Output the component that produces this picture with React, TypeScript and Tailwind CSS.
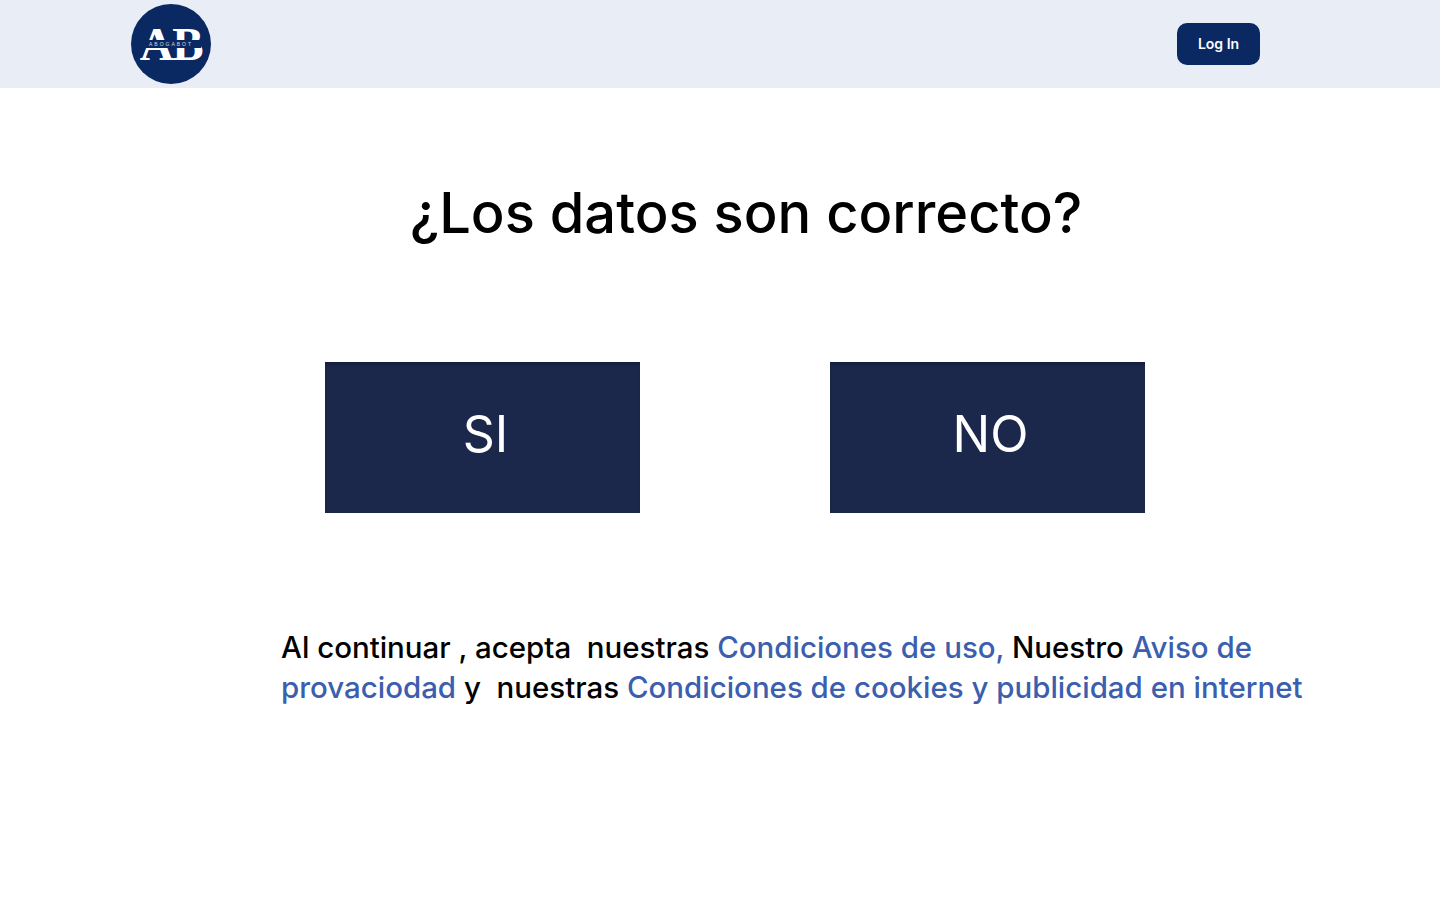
const FONT = "font-['Inter','Noto_Sans',sans-serif]";

function Logo() {
  return (
    <div className="relative flex h-20 w-20 items-center justify-center rounded-full bg-[#0a2861]">
      <span className="font-['Liberation_Serif',serif] text-[47px] font-bold leading-none tracking-[-1.5px] text-white">
        AB
      </span>
      <span className="absolute left-[10px] right-[10px] top-[36px] bg-[#0a2861] text-center font-['Liberation_Sans',sans-serif] text-[5px] leading-[8px] tracking-[2px] text-white/80">
        ABOGABOT
      </span>
    </div>
  );
}

function ChoiceButton({ label }: { label: string }) {
  return (
    <button
      type="button"
      className="h-[151px] w-[315px] bg-[#1b284b] pb-[8px] pl-[6px] text-[50px] font-normal leading-none text-white shadow-[inset_0_4px_3px_-1px_#151f42]"
    >
      {label}
    </button>
  );
}

export default function App() {
  return (
    <div className={`min-h-[902px] bg-white text-black ${FONT}`}>
      <header className="bg-[#e9edf6] pb-[4px] pl-[131px] pr-[180px] pt-[4px]">
        <div className="flex items-center justify-between">
          <Logo />
          <button
            type="button"
            className="h-[42px] w-[83px] rounded-[10px] bg-[#0a2861] pb-[2px] text-[14px] font-semibold text-white"
          >
            Log In
          </button>
        </div>
      </header>

      <main>
        <h1 className="pl-[52px] pt-[88px] text-center text-[56px] font-medium leading-[74px]">
          ¿Los datos son correcto?
        </h1>

        <div className="mt-[112px] flex gap-[190px] pl-[325px]">
          <ChoiceButton label="SI" />
          <ChoiceButton label="NO" />
        </div>

        <p className="ml-[281px] mt-[114px] w-[1040px] text-[29.46px] font-medium leading-[40px]">
          Al continuar , acepta&nbsp; nuestras <span className="text-[#3b5fae]">Condiciones de uso,</span> Nuestro{" "}
          <span className="text-[#3b5fae]">Aviso de provaciodad</span> y&nbsp; nuestras{" "}
          <span className="text-[#3b5fae]">Condiciones de cookies y publicidad en internet</span>
        </p>
      </main>
    </div>
  );
}
